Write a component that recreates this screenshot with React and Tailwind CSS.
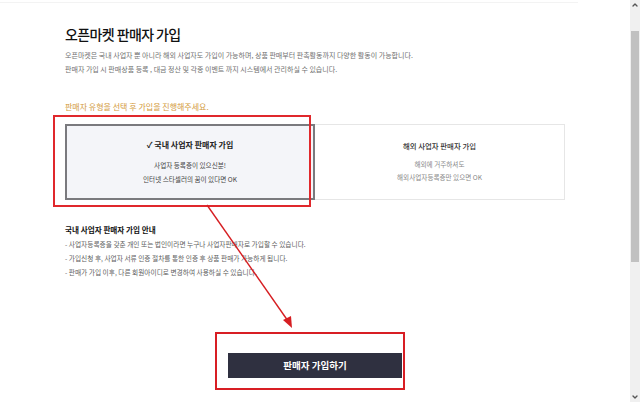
import { ChevronUp, ChevronDown } from 'lucide-react'

const GUIDE = [
    '- 사업자등록증을 갖춘 개인 또는 법인이라면 누구나 사업자판매자로 가입할 수 있습니다.',
    '- 가입신청 후, 사업자 서류 인증 절차를 통한 인증 후 상품 판매가 가능하게 됩니다.',
    '- 판매가 가입 이후, 다른 회원아이디로 변경하여 사용하실 수 있습니다.',
]

export default function App() {
    return (
        <div className="relative w-[640px] h-[402px] overflow-hidden bg-white flex font-['Noto_Sans_CJK_KR',sans-serif]">
            <div className="absolute left-0 top-[2px] w-[578px] h-px bg-[#f3f3f3]" />
            <main className="flex-1 pl-[65px] pt-[24px]">
                <h1 className="text-[14px] leading-[20px] font-medium tracking-[-0.6px] text-[#111]">오픈마켓 판매자 가입</h1>
                <div className="mt-[4px] text-[7px] leading-[14px] text-[#707070]">
                    <p>오픈마켓은 국내 사업자 뿐 아니라 해외 사업자도 가입이 가능하며, 상품 판매부터 판촉활동까지 다양한 활동이 가능합니다.</p>
                    <p>판매자 가입 시 판매상품 등록 , 대금 정산 및 각종 이벤트 까지 시스템에서 관리하실 수 있습니다.</p>
                </div>
                <p className="mt-[25px] text-[8px] leading-[12px] text-[#d39a3c]">판매자 유형을 선택 후 가입을 진행해주세요.</p>

                <div className="mt-[11px] w-[500px] h-[76px] flex">
                    <button className="w-[250px] h-full bg-[#f4f5f9] border-2 border-[#7a7a7e] flex flex-col items-center justify-center">
                        <p className="text-[8px] leading-[12px] font-bold text-[#222]">✓ 국내 사업자 판매자 가입</p>
                        <p className="mt-[7px] text-[6.6px] leading-[14px] text-[#444]">사업자 등록증이 있으신분!<br />인터넷 스타셀러의 꿈이 있다면 OK</p>
                    </button>
                    <button className="w-[250px] h-full border border-l-0 border-[#e6e6e6] flex flex-col items-center justify-center">
                        <p className="text-[7.4px] leading-[12px] font-medium text-[#333]">해외 사업자 판매자 가입</p>
                        <p className="mt-[6px] text-[6.6px] leading-[13px] text-[#888]">해외에 거주하셔도<br />해외사업자등록증만 있으면 OK</p>
                    </button>
                </div>

                <h2 className="mt-[24px] text-[7.6px] leading-[12px] font-bold text-[#111]">국내 사업자 판매자 가입 안내</h2>
                <ul className="mt-[1px] text-[6.7px] leading-[14px] text-[#606060]">
                    {GUIDE.map(t => <li key={t}>{t}</li>)}
                </ul>

                <div className="mt-[74px] w-[500px] flex justify-center">
                    <button className="w-[174px] h-[25px] bg-[#2f3040] text-white text-[9.5px] font-bold">판매자 가입하기</button>
                </div>
            </main>

            <div className="w-[10px] h-full bg-[#f0f0f0] flex flex-col items-center">
                <ChevronUp size={8} strokeWidth={4} className="mt-[1px] text-[#555]" />
                <div className="mt-[22px] w-[8px] h-[231px] bg-[#c1c1c1]" />
                <div className="flex-1" />
                <ChevronDown size={8} strokeWidth={4} className="mb-[1px] text-[#555]" />
            </div>

            <div className="absolute left-[53px] top-[115px] w-[258px] h-[92px] border-2 border-[#e0282c]" />
            <div className="absolute left-[215px] top-[332px] w-[190px] h-[58px] border-2 border-[#d81e24]" />
            <svg className="absolute left-0 top-0" width="640" height="402">
                <line x1="207" y1="205" x2="288" y2="321" stroke="#d61e22" strokeWidth="1.4" />
                <polygon points="292,328 283,320 291,316" fill="#d61e22" />
            </svg>
        </div>
    )
}
